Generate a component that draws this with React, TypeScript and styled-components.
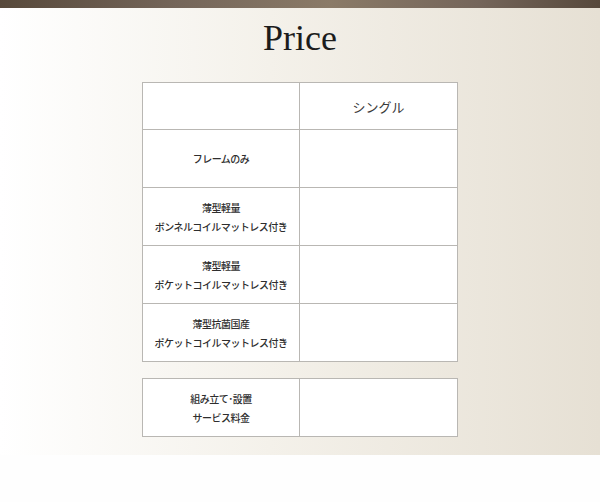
import React from 'react';
import styled, { createGlobalStyle } from 'styled-components';

const GlobalStyle = createGlobalStyle`
  html, body {
    margin: 0;
    padding: 0;
    background: #fefefe;
  }
  body {
    font-family: 'Noto Sans CJK JP', 'Noto Sans', sans-serif;
  }
`;

interface PriceRow {
  label: string[];
}

const mainRows: PriceRow[] = [
  { label: ['フレームのみ'] },
  { label: ['薄型軽量', 'ボンネルコイルマットレス付き'] },
  { label: ['薄型軽量', 'ポケットコイルマットレス付き'] },
  { label: ['薄型抗菌国産', 'ポケットコイルマットレス付き'] },
];

const App: React.FC = (): JSX.Element => {
  return (
    <>
      <GlobalStyle />
      <Page>
        <TopBar />
        <Section>
          <Title>Price</Title>
          <PriceTable>
            <Row height={46} first>
              <LabelCell />
              <ValueCell header>シングル</ValueCell>
            </Row>
            {mainRows.map((row, i) => (
              <Row key={i} height={58}>
                <LabelCell>
                  {row.label.map((line, j) => (
                    <span key={j}>{line}</span>
                  ))}
                </LabelCell>
                <ValueCell />
              </Row>
            ))}
          </PriceTable>
          <PriceTable>
            <Row height={57} first>
              <LabelCell>
                <span>組み立て･設置</span>
                <span>サービス料金</span>
              </LabelCell>
              <ValueCell />
            </Row>
          </PriceTable>
        </Section>
      </Page>
    </>
  );
};

const Page = styled.div`
  width: 600px;
  min-height: 502px;
  background: #fefefe;
`;

const TopBar = styled.div`
  height: 8px;
  background: linear-gradient(
    to right,
    #57493b 0%,
    #75665a 30%,
    #8a7a67 55%,
    #74655a 80%,
    #56483b 100%
  );
`;

const Section = styled.div`
  display: flex;
  flex-direction: column;
  align-items: center;
  gap: 16px;
  padding: 0 0 18px;
  background: linear-gradient(to right, #ffffff 0%, #f4f1ea 45%, #e6e0d4 100%);
`;

const Title = styled.h1`
  margin: 0;
  height: 60px;
  margin-bottom: -2px;
  display: flex;
  align-items: center;
  justify-content: center;
  font-family: 'Liberation Serif', 'Times New Roman', serif;
  font-weight: normal;
  font-size: 36px;
  color: #1c1c1c;
  line-height: 1;
`;

const PriceTable = styled.div`
  width: 316px;
  box-sizing: border-box;
  border: 1px solid #b9b7b3;
  background: #ffffff;
`;

const Row = styled.div<{ height: number; first?: boolean }>`
  display: flex;
  box-sizing: border-box;
  height: ${(p) => p.height}px;
  border-top: ${(p) => (p.first ? 'none' : '1px solid #b9b7b3')};
`;

const LabelCell = styled.div`
  width: 157px;
  box-sizing: border-box;
  border-right: 1px solid #b9b7b3;
  display: flex;
  flex-direction: column;
  align-items: center;
  justify-content: center;
  font-size: 10px;
  font-weight: 500;
  letter-spacing: -0.5px;
  line-height: 19px;
  color: #2e2e2e;
`;

const ValueCell = styled.div<{ header?: boolean }>`
  flex: 1;
  display: flex;
  align-items: center;
  justify-content: center;
  font-size: ${(p) => (p.header ? '13px' : '10px')};
  color: #3a3a3a;
`;

export default App;
